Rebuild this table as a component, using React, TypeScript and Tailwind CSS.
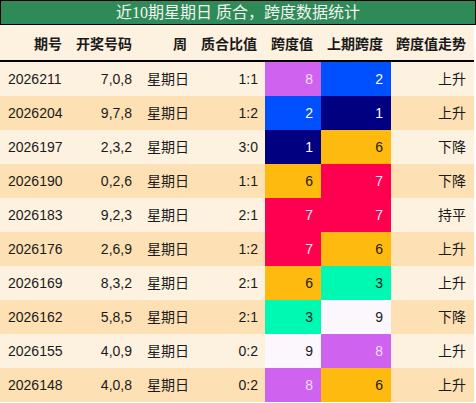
import React from "react";

type Row = {
  issue: string;
  nums: string;
  week: string;
  ratio: string;
  span: number;
  prev: number;
  trend: string;
};

const rows: Row[] = [
  { issue: "2026211", nums: "7,0,8", week: "星期日", ratio: "1:1", span: 8, prev: 2, trend: "上升" },
  { issue: "2026204", nums: "9,7,8", week: "星期日", ratio: "1:2", span: 2, prev: 1, trend: "上升" },
  { issue: "2026197", nums: "2,3,2", week: "星期日", ratio: "3:0", span: 1, prev: 6, trend: "下降" },
  { issue: "2026190", nums: "0,2,6", week: "星期日", ratio: "1:1", span: 6, prev: 7, trend: "下降" },
  { issue: "2026183", nums: "9,2,3", week: "星期日", ratio: "2:1", span: 7, prev: 7, trend: "持平" },
  { issue: "2026176", nums: "2,6,9", week: "星期日", ratio: "1:2", span: 7, prev: 6, trend: "上升" },
  { issue: "2026169", nums: "8,3,2", week: "星期日", ratio: "2:1", span: 6, prev: 3, trend: "上升" },
  { issue: "2026162", nums: "5,8,5", week: "星期日", ratio: "2:1", span: 3, prev: 9, trend: "下降" },
  { issue: "2026155", nums: "4,0,9", week: "星期日", ratio: "0:2", span: 9, prev: 8, trend: "上升" },
  { issue: "2026148", nums: "4,0,8", week: "星期日", ratio: "0:2", span: 8, prev: 6, trend: "上升" },
];

// colour per span value
const spanClass: Record<number, string> = {
  1: "bg-[#000080] text-white",
  2: "bg-[#0050ff] text-white",
  3: "bg-[#00f9b2] text-[#1a1a1a]",
  6: "bg-[#ffba10] text-[#1a1a1a]",
  7: "bg-[#ff0050] text-[#ffe6ee]",
  8: "bg-[#d062f0] text-[#f6dcff]",
  9: "bg-[#fcf6fd] text-[#1a1a1a]",
};

const cols = "grid grid-cols-[70px_70px_55px_70px_56px_70px_83px]";
const headers = ["期号", "开奖号码", "周", "质合比值", "跨度值", "上期跨度", "跨度值走势"];

export default function App() {
  return (
    <div className="w-[476px] h-[403px] bg-white text-[14px] text-[#1a1a1a] font-['Liberation_Sans','Noto_Sans_CJK_SC',sans-serif]">
      <div className="h-[25px] border border-black bg-[#2e8b57] text-[#f3f3f3] text-[16px] leading-[23px] text-center font-['Liberation_Serif','Noto_Sans_CJK_SC',serif]">
        近10期星期日 质合，跨度数据统计
      </div>
      <div className="w-[474px]">
        <div className={`${cols} h-[37px] bg-[#fdf1e0] border-b-2 border-black font-bold font-['Noto_Sans_CJK_SC',sans-serif]`}>
          {headers.map((h) => (
            <div key={h} className="flex items-center justify-end pr-2 pt-[2px]">
              {h}
            </div>
          ))}
        </div>
        {rows.map((r, i) => (
          <div
            key={r.issue}
            className={`${cols} h-[34px] ${i % 2 === 0 ? "bg-[#fdf1e0]" : "bg-[#fde0b3]"}`}
          >
            <div className="flex items-center pl-2">{r.issue}</div>
            <div className="flex items-center justify-end pr-2">{r.nums}</div>
            <div className="flex items-center pl-[7px]">{r.week}</div>
            <div className="flex items-center justify-end pr-[7px]">{r.ratio}</div>
            <div className={`flex items-center justify-end pr-2 ${spanClass[r.span]}`}>{r.span}</div>
            <div className={`flex items-center justify-end pr-2 ${spanClass[r.prev]}`}>{r.prev}</div>
            <div className="flex items-center justify-end pr-2">{r.trend}</div>
          </div>
        ))}
      </div>
    </div>
  );
}
